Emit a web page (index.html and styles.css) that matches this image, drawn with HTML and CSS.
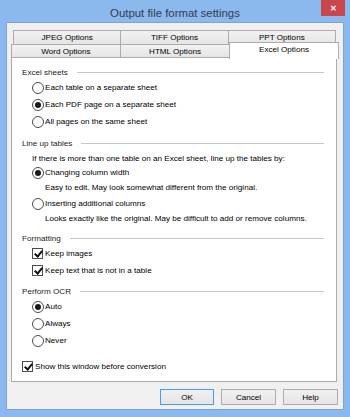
FILE: index.html
```html
<!DOCTYPE html>
<html lang="en">
<head>
  <meta charset="UTF-8">
  <title>Output file format settings</title>
  <link rel="stylesheet" href="styles.css">
</head>
<body>

  <div class="window">
    <div class="titlebar">
      <span class="title">Output file format settings</span>
      <div class="close">&#x2715;</div>
    </div>

    <div class="client">
      <div class="tabs">
        <div class="tab-row back">
          <div class="tab">JPEG Options</div>
          <div class="tab">TIFF Options</div>
          <div class="tab">PPT Options</div>
        </div>
        <div class="tab-row front">
          <div class="tab">Word Options</div>
          <div class="tab">HTML Options</div>
          <div class="tab active">Excel Options</div>
        </div>
      </div>

      <div class="panel">
        <div class="group-title">Excel sheets</div>
        <label class="opt"><span class="radio"></span>Each table on a separate sheet</label>
        <label class="opt"><span class="radio on"></span>Each PDF page on a separate sheet</label>
        <label class="opt"><span class="radio"></span>All pages on the same sheet</label>

        <div class="group-title gap">Line up tables</div>
        <div class="note first">If there is more than one table on an Excel sheet, line up the tables by:</div>
        <label class="opt tight"><span class="radio on"></span>Changing column width</label>
        <div class="hint">Easy to edit. May look somewhat different from the original.</div>
        <label class="opt tight"><span class="radio"></span>Inserting additional columns</label>
        <div class="hint">Looks exactly like the original. May be difficult to add or remove columns.</div>

        <div class="group-title gap-sm">Formatting</div>
        <label class="opt"><span class="check on"></span>Keep images</label>
        <label class="opt"><span class="check on"></span>Keep text that is not in a table</label>

        <div class="group-title gap short">Perform OCR</div>
        <label class="opt"><span class="radio on"></span>Auto</label>
        <label class="opt"><span class="radio"></span>Always</label>
        <label class="opt"><span class="radio"></span>Never</label>

        <label class="opt bottom"><span class="check on"></span>Show this window before conversion</label>
      </div>

      <div class="buttons">
        <button class="default">OK</button>
        <button>Cancel</button>
        <button>Help</button>
      </div>
    </div>
  </div>

</body>
</html>
```

FILE: styles.css
```css
* {
  margin: 0;
  padding: 0;
  box-sizing: border-box;
}
body {
  font-family: 'Liberation Sans', Arial, sans-serif;
  font-size: 8.1px;
  color: #000;
  background: #8bb9ee;
  width: 350px;
  height: 417px;
  overflow: hidden;
  white-space: nowrap;
}
.window {
  display: flex;
  flex-direction: column;
  height: 417px;
  padding: 0 6px 7px 6px;
}
.titlebar {
  position: relative;
  height: 22px;
  display: flex;
  align-items: center;
  justify-content: center;
}
.title {
  font-size: 11.4px;
  color: #333c48;
  padding-top: 3px;
}
.close {
  position: absolute;
  top: 0;
  right: -1px;
  width: 24px;
  height: 16px;
  background: #c9464c;
  color: #fff;
  font-size: 8px;
  font-weight: bold;
  display: flex;
  align-items: center;
  justify-content: center;
}
.client {
  flex: 1;
  background: #f0f0f0;
  border: 1px solid #7ea4cf;
  padding: 7px 5px 0 4px;
}

/* tabs */
.tabs {
  display: flex;
  flex-direction: column;
}
.tab-row {
  display: flex;
}
.tab-row.back {
  margin: 0 3px 0 2px;
  height: 14px;
}
.tab-row.front {
  height: 13px;
  align-items: flex-end;
}
.tab {
  flex: 1;
  height: 14px;
  border: 1px solid #acacac;
  border-bottom: none;
  background: linear-gradient(#f2f2f2, #e5e5e5);
  text-align: center;
  line-height: 14px;
  margin-right: -1px;
}
.tab-row.front .tab {
  height: 13px;
  line-height: 13px;
}
.tab-row.front .tab.active {
  position: relative;
  z-index: 1;
  height: 17px;
  line-height: 13px;
  margin-bottom: -2px;
  margin-right: -1px;
  background: #fff;
  border-color: #acacac;
}

.panel {
  height: 325px;
  background: #fff;
  border: 1px solid #acacac;
  padding: 7px 12px 0 10px;
  margin-right: 1px;
}
.group-title {
  display: flex;
  align-items: center;
  height: 14px;
  color: #1c1c1c;
}
.group-title::after {
  content: "";
  flex: 1;
  height: 1px;
  background: #c8c8c8;
  margin-left: 9px;
}
.group-title.gap { margin-top: 6px; }
.group-title.gap-sm { margin-top: 4px; }
.group-title.short { height: 13px; }

.opt {
  display: flex;
  align-items: center;
  height: 17px;
  padding-left: 10px;
}
.opt.tight { height: 15px; }
.opt.bottom {
  margin-top: 9px;
  padding-left: 0;
}
.note {
  padding-left: 10px;
  height: 13px;
  line-height: 13px;
}
.note.first { margin-top: 2px; }
.hint {
  padding-left: 23px;
  height: 16px;
  line-height: 16px;
}

.radio {
  width: 12px;
  height: 12px;
  border: 1px solid #4c4c4c;
  border-radius: 50%;
  background: #fff;
  margin-right: 1px;
  display: flex;
  align-items: center;
  justify-content: center;
}
.radio.on::after {
  content: "";
  width: 6px;
  height: 6px;
  border-radius: 50%;
  background: #1a1a1a;
}
.check {
  position: relative;
  width: 11px;
  height: 11px;
  border: 1px solid #4c4c4c;
  background: #fff;
  margin-right: 2px;
}
.check.on::after {
  content: "";
  position: absolute;
  left: 3px;
  top: 0;
  width: 3px;
  height: 6px;
  border: solid #111;
  border-width: 0 2px 2px 0;
  transform: rotate(40deg);
}

.buttons {
  display: flex;
  justify-content: flex-end;
  gap: 7px;
  margin-top: 7px;
}
button {
  font-family: inherit;
  font-size: 8.1px;
  width: 55px;
  height: 16px;
  border: 1px solid #adadad;
  background: linear-gradient(#f0f0f0, #e5e5e5);
  color: #000;
}
button.default {
  width: 54px;
  border-color: #4a9be8;
}
```
